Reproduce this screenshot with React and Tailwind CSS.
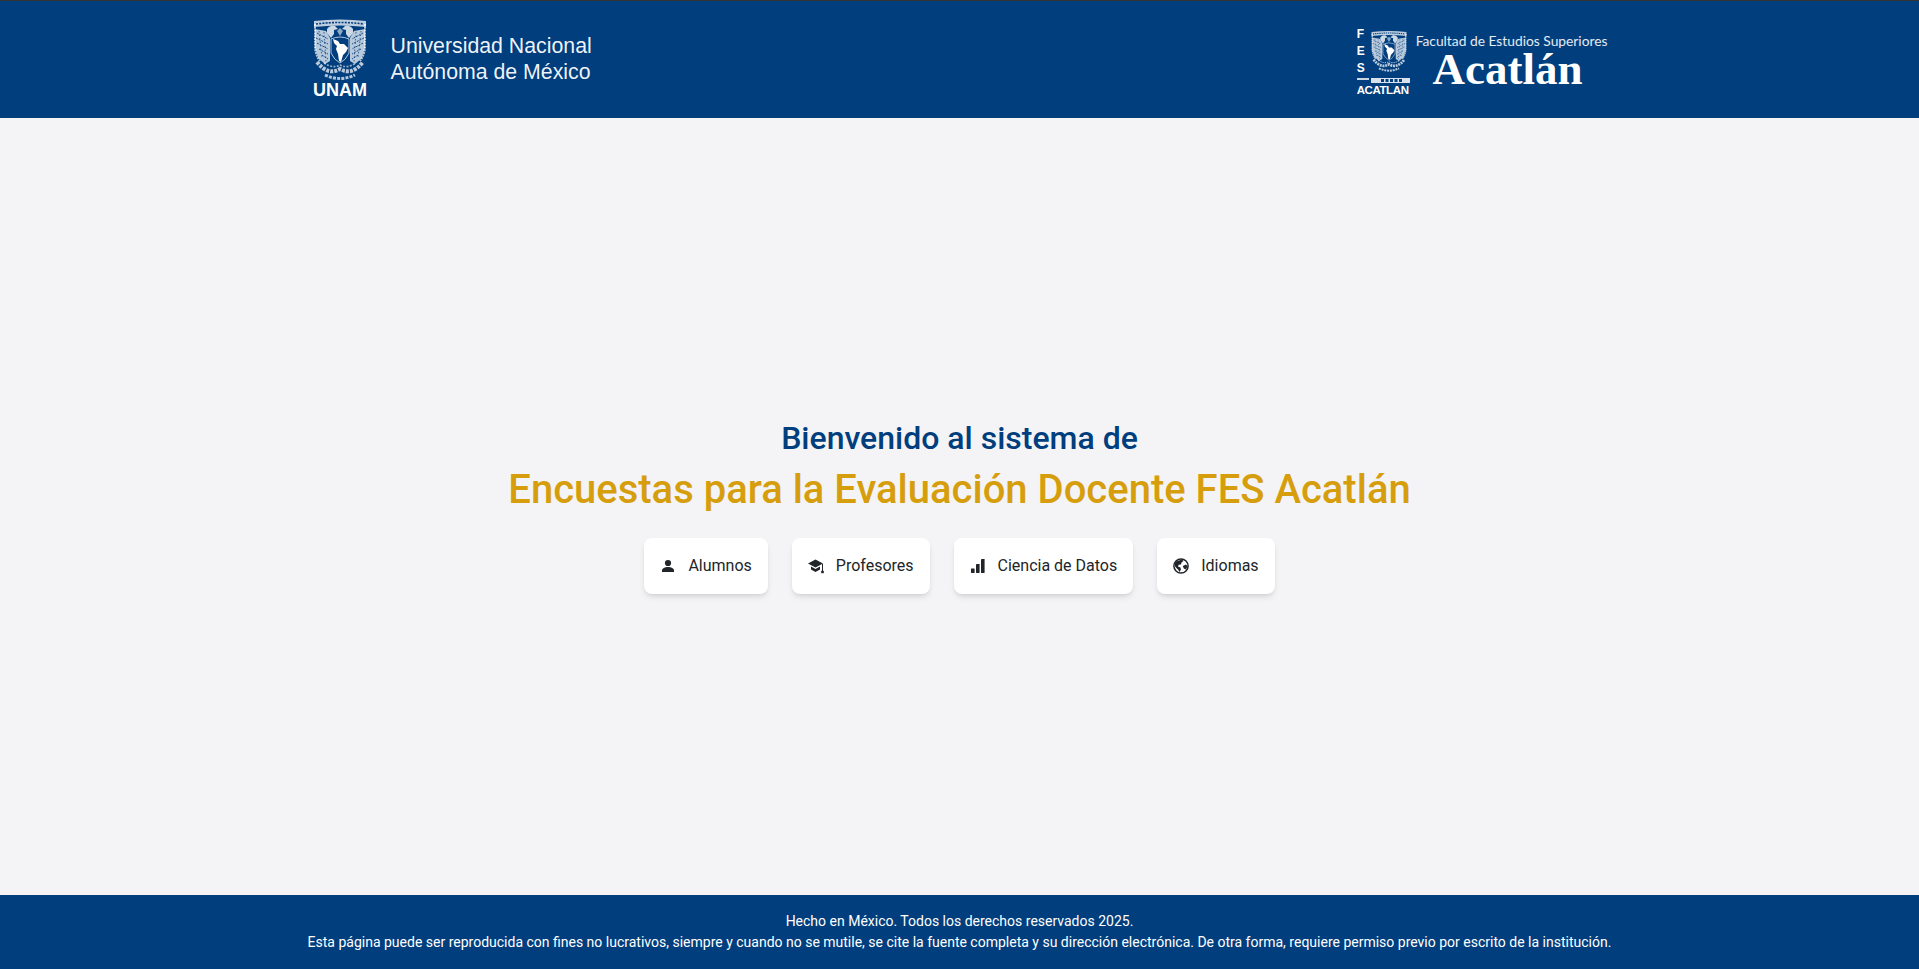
import React from 'react';

// One half of the escudo: wing and head, mirrored for the condor
function CrestWing(){
  return (
    <g>
      <path d="M2 11 L13 13 L17 20 L17 43 L12 46 L6 41 L2 30Z" fill="#fff" opacity=".72"/>
      <path d="M4 15 L15 21 M3 20 L15 26 M4 25 L15 31 M6 31 L15 36 M9 37 L15 41" stroke="#003e7e" strokeWidth=".9" strokeDasharray="2 1"/>
      <path d="M6 13 L9 40 M11 14 L13 44" stroke="#003e7e" strokeWidth=".7" strokeDasharray="1.5 2"/>
      <path d="M14 11 Q17 7 22 8 L25 11 L21 12 L21 16 L18 20 L14 15Z" fill="#fff" opacity=".8"/>
      <path d="M2 6 V30 Q3 38 7 43" fill="none" stroke="#fff" strokeWidth="2" strokeDasharray="2 .8" opacity=".7"/>
    </g>
  );
}

// Escudo de la UNAM, simplified drawing of the crest
function Crest({ className }){
  return (
    <svg viewBox="0 0 54 64" className={`${className} blur-[0.4px]`}>
      {/* lettered band */}
      <path d="M1 3 Q27 0 53 3 V9 Q27 6 1 9Z" fill="#fff" opacity=".75"/>
      <path d="M3 6 Q27 3 51 6" fill="none" stroke="#003e7e" strokeWidth="1.6" strokeDasharray="2 1.2"/>
      <CrestWing/>
      <g transform="translate(54,0) scale(-1,1)"><CrestWing/></g>
      <path d="M24 13 L27 10 L30 13 L27 18Z" fill="#fff" opacity=".55"/>
      {/* shield with the map of Latin America */}
      <path d="M18 21 Q27 17 36 21 V35 Q33 42 27 45 Q21 42 18 35Z" fill="#003e7e" stroke="#fff" strokeWidth=".7"/>
      <path d="M20 21 L25 23 L27 26 L31 26 L35 30 L33 34 L30 37 L28 44 L26 43 L25 36 L23 31 L24 28 L21 25Z" fill="#fff"/>
      {/* branches */}
      <path d="M4 44 Q15 58 27 51 Q39 58 50 44" fill="none" stroke="#fff" strokeWidth="4" strokeDasharray="3 1.1" opacity=".72"/>
      <path d="M11 45 Q20 51 27 47 Q34 51 43 45" fill="none" stroke="#fff" strokeWidth="1.6" strokeDasharray="2 1.4" opacity=".6"/>
      <path d="M12 57 Q27 64 42 57" fill="none" stroke="#fff" strokeWidth="3" strokeDasharray="3 1.2" opacity=".7"/>
    </svg>
  );
}

function UnamLogo(){
  return (
    <div className="flex items-start">
      <div className="flex flex-col items-center w-[55px] mt-[17px] ml-[1px]">
        <Crest className="w-[54px] h-[64px]"/>
        <div className="font-['Liberation_Sans',sans-serif] font-bold text-white text-[18px] leading-[13px] mt-[2px]">UNAM</div>
      </div>
      <div className="ml-[23px] mt-[32px] font-['Liberation_Sans',sans-serif] text-[21.3px] leading-[26px] text-white/95">
        <div>Universidad Nacional</div>
        <div>Autónoma de México</div>
      </div>
    </div>
  );
}

function AcatlanLogo(){
  return (
    <div className="flex items-start mt-[29px]">
      <div className="w-[53px]">
        <div className="flex">
          <div className="w-[13px] flex flex-col font-['Liberation_Sans',sans-serif] font-bold text-white text-[12px] leading-[17px] -mt-[4px]">
            <span>F</span><span>E</span><span>S</span>
          </div>
          <Crest className="w-[38px] h-[43px]"/>
        </div>
        <svg viewBox="0 0 53 5" className="w-[53px] h-[5px] mt-[1px]">
          <rect x="14" y="0" width="39" height="5" fill="#fff" opacity=".85"/>
          <path d="M24 2.5 H45" stroke="#003e7e" strokeWidth="3" strokeDasharray="3 1.5"/>
          <path d="M0 1 H12" stroke="#fff" strokeWidth="1.6"/>
        </svg>
        <div className="font-['Liberation_Sans',sans-serif] font-bold text-white text-[11.5px] leading-[11px] tracking-[-0.4px] mt-[2px] whitespace-nowrap">ACATLAN</div>
      </div>
      <div className="ml-[6px] flex flex-col items-center">
        <div className="font-['Lato',sans-serif] text-white/90 text-[13.8px] leading-[17px] mt-[2px] whitespace-nowrap">Facultad de Estudios Superiores</div>
        <div className="font-['Liberation_Serif',serif] font-bold text-white text-[45px] leading-[34px] mt-[3px] pr-[8px]">Acatlán</div>
      </div>
    </div>
  );
}

function PersonIcon(){
  return (
    <svg viewBox="0 0 16 16" fill="currentColor" className="w-4 h-4 shrink-0">
      <circle cx="8" cy="5" r="3.1"/>
      <path d="M2 14 v-1.4 C2 10.2 5 9 8 9 s6 1.2 6 3.6 V14Z"/>
    </svg>
  );
}

function CapIcon(){
  return (
    <svg viewBox="0 0 16 16" fill="currentColor" className="w-4 h-4 shrink-0">
      <path d="M7.5 1.5 L0 5.5 L7.5 9.5 L15 5.5Z"/>
      <path d="M3 8.6 V11.4 L7.5 14 L12 11.4 V8.6 L7.5 11Z"/>
      <rect x="14" y="6" width="1" height="7"/>
      <rect x="13.2" y="12.8" width="2.6" height="2.4"/>
    </svg>
  );
}

function BarsIcon(){
  return (
    <svg viewBox="0 0 16 16" fill="currentColor" className="w-4 h-4 shrink-0">
      <rect x="1" y="10.5" width="3.6" height="4.5" rx=".4"/>
      <rect x="6" y="6" width="3.6" height="9" rx=".4"/>
      <rect x="11" y="1" width="3.6" height="14" rx=".4"/>
    </svg>
  );
}

function GlobeIcon(){
  return (
    <svg viewBox="0 0 16 16" className="w-4 h-4 shrink-0">
      <circle cx="8" cy="8" r="7.1" fill="none" stroke="currentColor" strokeWidth="1.5"/>
      <path fill="currentColor" d="M3 3.5 L9 1.5 L10.5 3 L8.5 4.6 L8 6.5 L5.6 6.8 L5 8.6 L7.4 9.4 L8 11.5 L6.5 14 L5.2 11.8 L2.4 9 L1.5 6Z"/>
      <path fill="currentColor" d="M9.8 8 L13 6.4 L14.6 8.2 L12.8 11.4 L10.8 10.6Z"/>
    </svg>
  );
}

const options = [
  { label: 'Alumnos', Icon: PersonIcon },
  { label: 'Profesores', Icon: CapIcon },
  { label: 'Ciencia de Datos', Icon: BarsIcon },
  { label: 'Idiomas', Icon: GlobeIcon },
];

export default function App(){
  return (
    <div className="h-screen flex flex-col bg-[#f4f4f6] font-['Roboto',sans-serif]">
      <header className="h-[118px] shrink-0 bg-[#003e7e] border-t border-[#333]">
        <div className="w-[1296px] mx-auto flex justify-between">
          <UnamLogo/>
          <AcatlanLogo/>
        </div>
      </header>

      <main className="flex-1 flex flex-col items-center justify-center">
        <h2 className="text-[32px] leading-[38px] font-medium text-[#003e7e]">Bienvenido al sistema de</h2>
        <h1 className="text-[40px] leading-[48px] font-medium text-[#d69e0d] mt-[9px]">Encuestas para la Evaluación Docente FES Acatlán</h1>
        <div className="flex gap-6 mt-[24px]">
          {options.map(({ label, Icon }) => (
            <button key={label} className="h-[56px] px-4 flex items-center gap-3 rounded-lg bg-white shadow-md text-[#212529] text-base">
              <Icon/>
              {label}
            </button>
          ))}
        </div>
      </main>

      <footer className="h-[74px] shrink-0 bg-[#003e7e] text-white text-sm leading-[21px] text-center pt-[16px]">
        <p>Hecho en México. Todos los derechos reservados 2025.</p>
        <p>Esta página puede ser reproducida con fines no lucrativos, siempre y cuando no se mutile, se cite la fuente completa y su dirección electrónica. De otra forma, requiere permiso previo por escrito de la institución.</p>
      </footer>
    </div>
  );
}
